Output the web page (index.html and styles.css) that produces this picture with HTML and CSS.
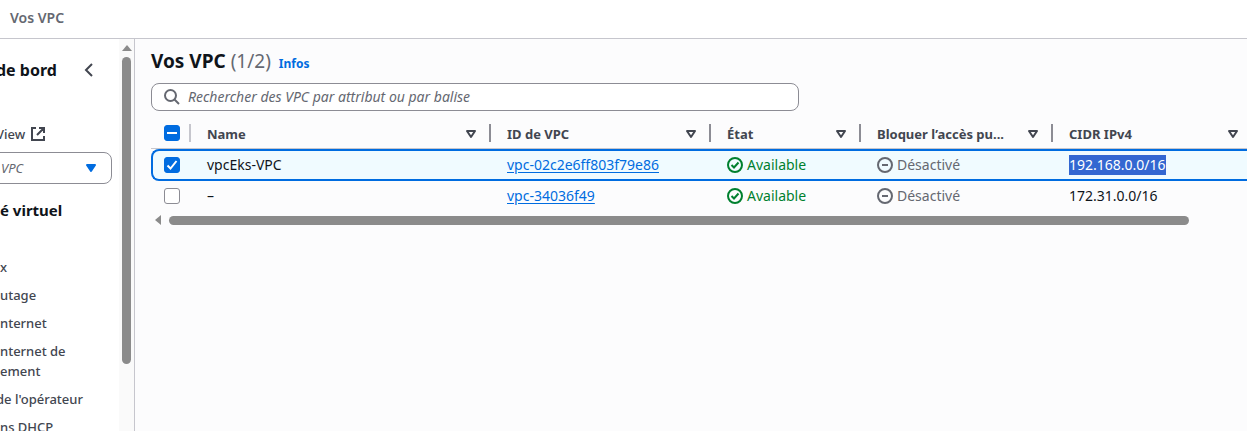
FILE: index.html
```html
<!DOCTYPE html>
<html lang="fr">
<head>
<meta charset="utf-8">
<title>Vos VPC</title>
<link rel="stylesheet" href="styles.css">
</head>
<body>
<svg class="defs" aria-hidden="true">
  <symbol id="filter" viewBox="0 0 12 10"><path d="M2 2h8L6 8z" fill="none" stroke="#424650" stroke-width="2" stroke-linejoin="round"/></symbol>
  <symbol id="ok" viewBox="0 0 16 16"><g fill="none" stroke="#00802f" stroke-width="2"><circle cx="8" cy="8" r="7"/><path d="M4.500 8L7 10.500l4.500-5"/></g></symbol>
  <symbol id="off" viewBox="0 0 16 16"><g fill="none" stroke="#656871" stroke-width="2"><circle cx="8" cy="8" r="7"/><path d="M5 8h6"/></g></symbol>
</svg>
<header class="topbar">Vos VPC</header>
<div class="layout">
  <aside class="sidebar">
    <nav class="nav">
      <div class="nav-head">
        <h2 class="nav-title clipped">de bord</h2>
        <button class="icon-button" aria-label="Fermer la navigation"><svg width="10" height="14" viewBox="0 0 10 14"><path d="M8 1L2 7l6 6" fill="none" stroke="#424650" stroke-width="2"/></svg></button>
      </div>
      <a class="view-link clipped" href="#">View <svg width="16" height="16" viewBox="0 0 16 16"><path d="M6 2H2v12h12v-4M9 2h5v5M14 2L7 9" fill="none" stroke="#424650" stroke-width="2"/></svg></a>
      <div class="select-wrap">
        <select class="vpc-select" aria-label="Filtrer par VPC"><option>VPC</option></select>
        <svg class="caret" width="12" height="10" viewBox="0 0 12 10"><path d="M2 2h8L6 8z" fill="#006ce0" stroke="#006ce0" stroke-width="2" stroke-linejoin="round"/></svg>
      </div>
      <h3 class="section-title">é virtuel</h3>
      <ul class="links">
        <li><a href="#">x</a></li>
        <li><a href="#">utage</a></li>
        <li><a href="#">nternet</a></li>
        <li><a href="#">nternet de<br>ement</a></li>
        <li><a class="clipped" href="#">de l'opérateur</a></li>
        <li><a href="#">ns DHCP</a></li>
      </ul>
    </nav>
    <div class="vscroll">
      <svg width="10" height="6" viewBox="0 0 10 6"><path d="M0 6L5 0l5 6z" fill="#8b8b8b"/></svg>
      <div class="vthumb"></div>
    </div>
  </aside>
  <main class="main">
    <div class="title-row">
      <h1 class="title">Vos VPC <span class="count">(1/2)</span></h1>
      <a class="info" href="#">Infos</a>
    </div>
    <div class="search">
      <svg width="16" height="16" viewBox="0 0 16 16"><g fill="none" stroke="#656871" stroke-width="2"><circle cx="6.500" cy="6.500" r="5.500"/><path d="M10.500 10.500L15 15"/></g></svg>
      <input class="search-input" type="text" aria-label="Rechercher" placeholder="Rechercher des VPC par attribut ou par balise">
    </div>
    <table class="table">
      <colgroup><col class="c-check"><col class="c-name"><col class="c-id"><col class="c-state"><col class="c-block"><col class="c-cidr"></colgroup>
      <thead>
        <tr>
          <th><span class="check"><input type="checkbox" class="on" checked aria-label="Tout sélectionner"><svg width="16" height="16" viewBox="0 0 16 16"><path d="M3 8h10" stroke="#fff" stroke-width="2"/></svg></span></th>
          <th><div class="head"><span>Name</span><svg width="12" height="10"><use href="#filter"/></svg></div></th>
          <th><div class="head"><span>ID de VPC</span><svg width="12" height="10"><use href="#filter"/></svg></div></th>
          <th><div class="head"><span>État</span><svg width="12" height="10"><use href="#filter"/></svg></div></th>
          <th><div class="head"><span>Bloquer l’accès pu...</span><svg width="12" height="10"><use href="#filter"/></svg></div></th>
          <th><div class="head"><span>CIDR IPv4</span><svg width="12" height="10"><use href="#filter"/></svg></div></th>
        </tr>
      </thead>
      <tbody>
        <tr class="selected">
          <td><span class="check"><input type="checkbox" class="on" checked aria-label="vpcEks-VPC"><svg width="16" height="16" viewBox="0 0 16 16"><path d="M3.500 8.500L6.500 11.500L12.500 4" fill="none" stroke="#fff" stroke-width="2"/></svg></span></td>
          <td>vpcEks-VPC</td>
          <td><a href="#">vpc-02c2e6ff803f79e86</a></td>
          <td><span class="status ok"><svg width="16" height="16"><use href="#ok"/></svg>Available</span></td>
          <td><span class="status off"><svg width="16" height="16"><use href="#off"/></svg>Désactivé</span></td>
          <td><mark>192.168.0.0/16</mark></td>
        </tr>
        <tr>
          <td><span class="check"><input type="checkbox" aria-label="vpc-34036f49"></span></td>
          <td>–</td>
          <td><a href="#">vpc-34036f49</a></td>
          <td><span class="status ok"><svg width="16" height="16"><use href="#ok"/></svg>Available</span></td>
          <td><span class="status off"><svg width="16" height="16"><use href="#off"/></svg>Désactivé</span></td>
          <td>172.31.0.0/16</td>
        </tr>
      </tbody>
    </table>
    <div class="hscroll">
      <svg width="6" height="10" viewBox="0 0 6 10"><path d="M6 0L0 5l6 5z" fill="#8b8b8b"/></svg>
      <div class="hthumb"></div>
    </div>
  </main>
</div>
</body>
</html>
```
FILE: styles.css
```css
* { box-sizing: border-box; }
body {
  margin: 0;
  height: 100vh;
  display: flex;
  flex-direction: column;
  overflow: hidden;
  background: #fcfcfd;
  color: #0f141a;
  font: 13px/20px "Noto Sans", "Open Sans", sans-serif;
}
.defs { display: none; }
svg { display: block; flex: none; }
.topbar {
  padding: 8px 10px 10px;
  background: #fff;
  border-bottom: 1px solid #c6c6cd;
  color: #656871;
  font-size: 14px;
  font-weight: 600;
}
.layout { display: flex; flex: 1; min-height: 0; }
.sidebar {
  display: flex;
  width: 135px;
  flex: none;
  overflow: hidden;
  background: #fff;
  border-right: 1px solid #c6c6cd;
}
.nav { flex: 1; min-width: 0; white-space: nowrap; }
.clipped { margin-left: -4px; }
.nav-head { display: flex; justify-content: space-between; align-items: center; padding: 18px 25px 0 0; }
.nav-title { margin-top: 0; margin-bottom: 0; font-size: 16px; line-height: 26px; }
.icon-button { padding: 0; border: 0; background: none; }
.view-link { display: flex; align-items: center; gap: 5px; margin-top: 41px; color: #424650; font-weight: 500; text-decoration: none; }
.select-wrap { display: grid; align-items: center; margin: 8px 7px 0 -8px; }
.vpc-select {
  grid-area: 1 / 1;
  appearance: none;
  width: 100%;
  height: 32px;
  padding: 0 8px;
  border: 1px solid #8c8c94;
  border-radius: 8px;
  background: #fff;
  color: #656871;
  font: italic 13px/20px "Noto Sans", sans-serif;
}
.caret { grid-area: 1 / 1; justify-self: end; margin-right: 15px; pointer-events: none; }
.section-title { margin: 15px 0 0; font-size: 15px; line-height: 22px; }
.links { margin: 36px 0 0; padding: 0; list-style: none; }
.links li { margin-bottom: 8px; }
.links a { color: #424650; font-weight: 500; text-decoration: none; }
.vscroll { display: flex; flex-direction: column; align-items: center; gap: 6px; width: 15px; padding-top: 6px; background: #fafafa; }
.vthumb { width: 9px; height: 307px; border-radius: 5px; background: #8b8b8b; }
.main { flex: 1; min-width: 0; padding: 8px 0 0 16px; overflow: hidden; }
.title-row { display: flex; align-items: baseline; gap: 8px; }
.title { margin: 0; font-size: 19px; line-height: 28px; }
.count { color: #656871; font-weight: 400; }
.info { color: #006ce0; font-size: 12px; font-weight: 700; text-decoration: none; }
.search {
  display: flex;
  align-items: center;
  gap: 8px;
  width: 648px;
  max-width: 100%;
  height: 28px;
  margin: 8px 0 7px;
  padding: 0 12px;
  border: 1px solid #8c8c94;
  border-radius: 8px;
  background: #fff;
}
.search-input { flex: 1; padding: 0; border: 0; outline: 0; background: none; font: italic 14px/20px "Noto Sans", sans-serif; }
.search-input::placeholder { color: #656871; opacity: 1; }
.table { width: 1102px; table-layout: fixed; border-collapse: separate; border-spacing: 0; white-space: nowrap; }
.c-check { width: 40px; }
.c-name { width: 300px; }
.c-id { width: 220px; }
.c-state { width: 150px; }
.c-block { width: 192px; }
th, td { padding: 0 16px; text-align: left; }
th { height: 31px; padding: 0; border-bottom: 1px solid #c6c6cd; color: #424650; }
th:first-child .check { margin-left: 13px; }
td:first-child { padding: 0 0 0 13px; }
.selected td:first-child { padding-left: 11px; }
.head { display: flex; align-items: center; justify-content: space-between; height: 18px; padding: 2px 12px 0 16px; border-right: 2px solid #8c8c94; }
th:first-child { background: linear-gradient(#c6c6cd, #c6c6cd) right center / 2px 18px no-repeat; }
td { height: 30px; font-size: 14px; }
.selected td { height: 32px; border-top: 2px solid #006ce0; border-bottom: 2px solid #006ce0; background: #f0fbff; }
.selected td:first-child { border-left: 2px solid #006ce0; border-radius: 8px 0 0 8px; }
td a { color: #006ce0; text-underline-offset: 2px; }
.check { display: grid; width: 16px; height: 16px; }
.check input { grid-area: 1 / 1; appearance: none; width: 16px; height: 16px; margin: 0; border: 1px solid #8c8c94; border-radius: 3px; background: #fff; }
.check .on { border-color: #006ce0; background: #006ce0; }
.check svg { grid-area: 1 / 1; z-index: 1; pointer-events: none; }
.status { display: flex; align-items: center; gap: 4px; }
.ok { color: #00802f; }
.off { color: #656871; }
mark { display: inline-block; background: #3367d1; color: #fff; }
.hscroll { display: flex; align-items: center; gap: 8px; padding: 4px 58px 0 4px; }
.hthumb { flex: 1; height: 9px; border-radius: 5px; background: #8b8b8b; }
```
